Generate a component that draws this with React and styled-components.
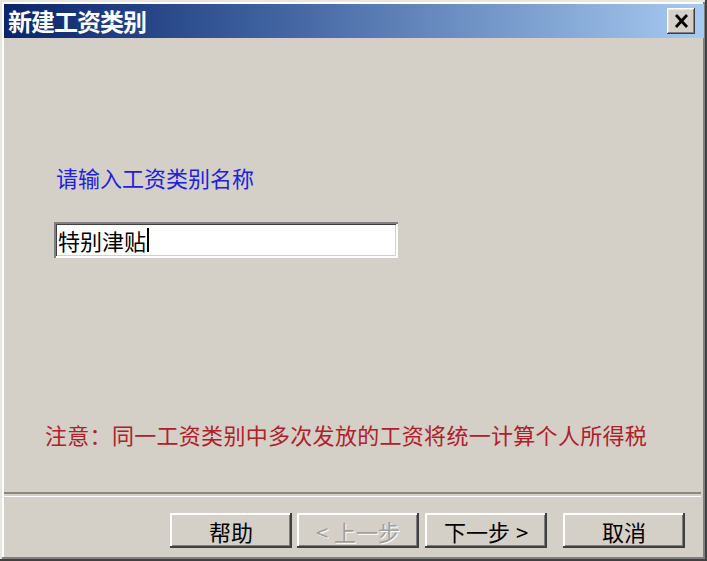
import React from 'react';
import styled, { createGlobalStyle } from 'styled-components';

const GlobalStyle = createGlobalStyle`
  html, body {
    margin: 0;
    padding: 0;
    background: #d4d0c8;
  }
  body {
    font-family: "Noto Sans CJK SC", "Liberation Sans", sans-serif;
  }
`;

const Window = styled.div`
  width: 707px;
  height: 561px;
  box-sizing: border-box;
  padding: 4px 3px 4px 4px;
  background: #d4d0c8;
  display: flex;
  flex-direction: column;
  box-shadow: inset -2px -2px 0 #404040, inset 2px 2px 0 #e8e6e0,
    inset -4px -4px 0 #808080, inset 4px 4px 0 #ffffff;
`;

const TitleBar = styled.div`
  height: 34px;
  display: flex;
  align-items: center;
  justify-content: space-between;
  padding: 0 9px 0 4px;
  background: linear-gradient(to right, #0a246a 0%, #3a5d9c 35%, #a6caf0 100%);
`;

const Title = styled.span`
  color: #fff;
  font-size: 24px;
  font-weight: 700;
  line-height: 24px;
  letter-spacing: -1px;
`;

const CloseButton = styled.div`
  width: 28px;
  height: 26px;
  box-sizing: border-box;
  background: #d4d0c8;
  display: flex;
  align-items: center;
  justify-content: center;
  box-shadow: inset -1px -1px 0 #404040, inset 1px 1px 0 #fff,
    inset -2px -2px 0 #808080, inset 2px 2px 0 #e8e6e0;
`;

const Body = styled.div`
  flex: 1;
  display: flex;
  flex-direction: column;
  padding-left: 41px;
`;

const Prompt = styled.div`
  margin: 127px 0 0 11px;
  font-size: 22px;
  line-height: 24px;
  color: #2020e0;
`;

const Field = styled.div`
  margin: 33px 0 0 9px;
  width: 344px;
  height: 36px;
  box-sizing: border-box;
  background: #fff;
  display: flex;
  align-items: center;
  padding-left: 4px;
  font-size: 22px;
  color: #000;
  box-shadow: inset 2px 2px 0 #808080, inset -2px -2px 0 #ffffff,
    inset 3px 3px 0 #404040, inset -3px -3px 0 #d4d0c8;
`;

const Caret = styled.span`
  display: inline-block;
  width: 2px;
  height: 24px;
  margin-left: 1px;
  background: #000;
`;

const Notice = styled.div`
  margin-top: 164px;
  font-size: 22px;
  line-height: 24px;
  letter-spacing: 0.3px;
  color: #b0202a;
`;

const Separator = styled.div`
  height: 2px;
  margin-right: 3px;
  border-top: 2px solid #8a8884;
  border-bottom: 1px solid #ffffff;
  margin-bottom: 16px;
`;

const Footer = styled.div`
  display: flex;
  padding-left: 166px;
  margin-bottom: 9px;
`;

const Button = styled.div`
  width: 122px;
  height: 35px;
  box-sizing: border-box;
  margin-left: ${p => p.$gap || 0}px;
  display: flex;
  align-items: center;
  justify-content: center;
  gap: 6px;
  font-size: 22px;
  color: ${p => (p.$disabled ? '#a09e9a' : '#000')};
  text-shadow: ${p => (p.$disabled ? '1px 1px 0 #fff' : 'none')};
  background: #d4d0c8;
  box-shadow: inset -2px -2px 0 #404040, inset 2px 2px 0 #ffffff,
    inset -3px -3px 0 #808080;
`;

export default function App() {
  return (
    <>
      <GlobalStyle />
      <Window>
        <TitleBar>
          <Title>新建工资类别</Title>
          <CloseButton>
            <svg width="15" height="14" viewBox="0 0 15 14">
              <path d="M2 1 L13 13 M13 1 L2 13" stroke="#000" strokeWidth="2.8" />
            </svg>
          </CloseButton>
        </TitleBar>
        <Body>
          <Prompt>请输入工资类别名称</Prompt>
          <Field>
            特别津贴
            <Caret />
          </Field>
          <Notice>注意：同一工资类别中多次发放的工资将统一计算个人所得税</Notice>
        </Body>
        <Separator />
        <Footer>
          <Button>帮助</Button>
          <Button $gap={5} $disabled><span>&lt;</span><span>上一步</span></Button>
          <Button $gap={6}><span>下一步</span><span>&gt;</span></Button>
          <Button $gap={16}>取消</Button>
        </Footer>
      </Window>
    </>
  );
}
